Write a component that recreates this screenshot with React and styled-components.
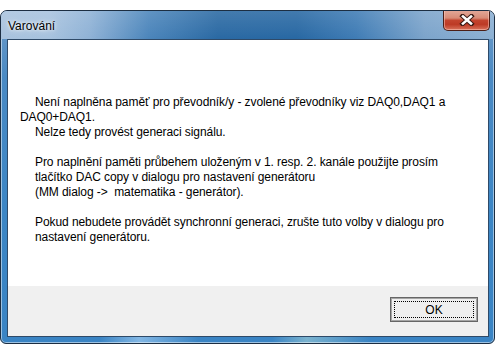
import React from "react";
import styled, { createGlobalStyle } from "styled-components";

const Global = createGlobalStyle`
  html, body { margin: 0; padding: 0; background: #ffffff; }
  body { font-family: "Liberation Sans", Arial, sans-serif; }
`;

const Page = styled.div`
  width: 496px;
  height: 354px;
  padding: 10px 1px 0 0;
  box-sizing: border-box;
  background: #ffffff;
`;

const Frame = styled.div`
  width: 495px;
  height: 334px;
  box-sizing: border-box;
  border: 1px solid #1c2e42;
  border-radius: 7px 7px 6px 6px;
  box-shadow: inset 0 0 0 1px rgba(255, 255, 255, 0.5);
  background:
    linear-gradient(90deg, rgba(255,255,255,0) 0%, rgba(255,255,255,0) 20%, rgba(190,225,255,0.55) 28%, rgba(255,255,255,0) 40%, rgba(255,255,255,0) 55%, rgba(200,235,220,0.45) 62%, rgba(255,255,255,0) 75%),
    linear-gradient(180deg, #6f9cc8 0%, #4a8ac4 20%, #3c86c5 60%, #3a84c4 100%);
  display: flex;
  flex-direction: column;
  overflow: hidden;
  position: relative;
`;

const TitleBar = styled.div`
  height: 28px;
  flex: none;
  display: flex;
  align-items: center;
  padding-left: 7px;
  background:
    linear-gradient(180deg, rgba(255,255,255,0.12) 0%, rgba(255,255,255,0) 100%),
    linear-gradient(90deg, #a9c3de 0%, #a7c2de 10%, #8fb2d6 18%, #4b85bb 30%, #2a69a3 44%, #2868a3 60%, #3f7cb5 72%, #7ca4cb 86%, #8cb0d3 100%);
`;

const Title = styled.span`
  font-family: "Liberation Sans", Arial, sans-serif;
  font-size: 12px;
  color: #000000;
  margin-top: 1px;
  text-shadow: 0 0 6px rgba(255, 255, 255, 0.9), 0 0 3px rgba(255, 255, 255, 0.9);
`;

const CloseButton = styled.div`
  position: absolute;
  top: -1px;
  right: 4px;
  width: 47px;
  height: 21px;
  box-sizing: border-box;
  border: 1px solid #4b1e16;
  border-top: none;
  border-radius: 0 0 5px 5px;
  background: linear-gradient(180deg, #e3aa9b 0%, #d88b77 40%, #c3442e 52%, #bd3a25 72%, #d9735c 100%);
  box-shadow: inset 0 0 0 1px rgba(255, 210, 200, 0.5);
  display: flex;
  align-items: center;
  justify-content: center;
`;

const Body = styled.div`
  flex: 1;
  margin: 0 5px 6px 6px;
  border: 1px solid #2f4a68;
  display: flex;
  flex-direction: column;
  background: #ffffff;
`;

const Content = styled.div`
  flex: 1;
  padding: 55px 0 0 12px;
  background: #ffffff;
`;

const Line = styled.div`
  font-family: "Liberation Sans", Arial, sans-serif;
  font-size: 12px;
  line-height: 15px;
  height: 15px;
  color: #000000;
  white-space: pre;
  letter-spacing: -0.08px;
  padding-left: ${(p) => (p.$indent ? "15px" : "0")};
`;

const Footer = styled.div`
  height: 50px;
  flex: none;
  background: #f0f0f0;
  display: flex;
  justify-content: flex-end;
  align-items: flex-start;
  padding: 11px 10px 0 0;
  box-sizing: border-box;
`;

const Button = styled.div`
  width: 88px;
  height: 25px;
  box-sizing: border-box;
  border: 1px solid #666666;
  box-shadow: inset 0 0 0 1px #a5a5a5;
  background: #efefef;
  padding: 3px;
  display: flex;
`;

const Focus = styled.div`
  flex: 1;
  border: 1px dotted #000000;
  display: flex;
  align-items: center;
  justify-content: center;
  font-family: "Liberation Sans", Arial, sans-serif;
  font-size: 12px;
  color: #000000;
`;

const lines = [
  [true, "Není naplněna paměť pro převodník/y - zvolené převodníky viz DAQ0,DAQ1 a"],
  [false, "DAQ0+DAQ1."],
  [true, "Nelze tedy provést generaci signálu."],
  [false, ""],
  [true, "Pro naplnění paměti průbehem uloženým v 1. resp. 2. kanále použijte prosím"],
  [true, "tlačítko DAC copy v dialogu pro nastavení generátoru"],
  [true, "(MM dialog ->  matematika - generátor)."],
  [false, ""],
  [true, "Pokud nebudete provádět synchronní generaci, zrušte tuto volby v dialogu pro"],
  [true, "nastavení generátoru."],
];

export default function App() {
  return (
    <Page>
      <Global />
      <Frame>
        <TitleBar>
          <Title>Varování</Title>
        </TitleBar>
        <CloseButton>
          <svg width="16" height="12" viewBox="0 0 16 12">
            <path
              d="M3.5 2 L12.5 10 M12.5 2 L3.5 10"
              fill="none"
              stroke="#3a1a14"
              strokeWidth="4.4"
              strokeLinecap="square"
            />
            <path
              d="M4 2.5 L12 9.5 M12 2.5 L4 9.5"
              fill="none"
              stroke="#ffffff"
              strokeWidth="2.6"
              strokeLinecap="square"
            />
          </svg>
        </CloseButton>
        <Body>
          <Content>
            {lines.map(([indent, text], i) => (
              <Line key={i} $indent={indent}>
                {text}
              </Line>
            ))}
          </Content>
          <Footer>
            <Button>
              <Focus>OK</Focus>
            </Button>
          </Footer>
        </Body>
      </Frame>
    </Page>
  );
}
